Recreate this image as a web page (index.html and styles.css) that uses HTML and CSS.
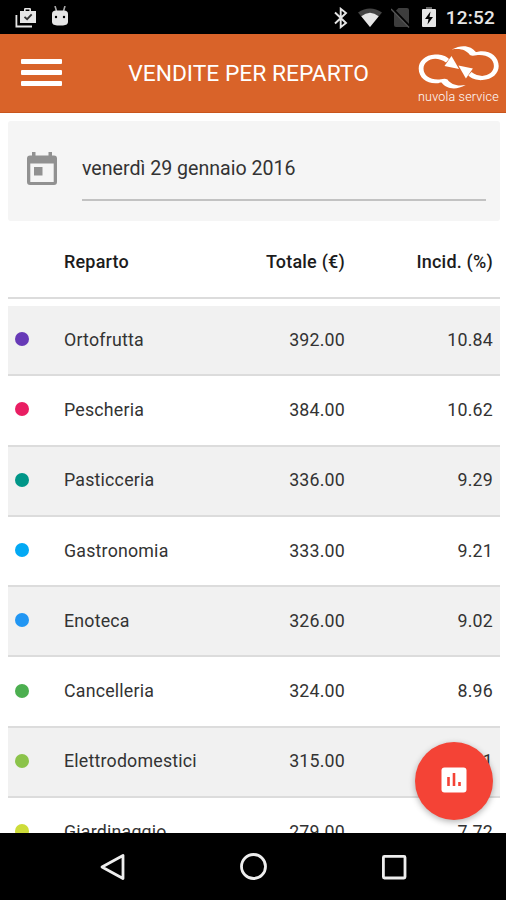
FILE: index.html
```
<!DOCTYPE html>
<html lang="it">

<head>
    <meta charset="UTF-8">
    <meta name="viewport" content="width=device-width, initial-scale=1.0">
    <title>Vendite per reparto</title>
    <link rel="stylesheet" href="styles.css">
</head>

<body>
    <div class="status-bar">
        <div class="status-bar__group">
            <svg class="status-bar__work" width="22" height="22" viewBox="0 0 22 22">
                <path d="M1.400 8v11.500h15.600" fill="none" stroke="#e6e6e6" stroke-width="1.800" />
                <path fill="#e6e6e6" fill-rule="evenodd" d="M5 4h4V2.200Q9 1 10.200 1h4.600Q16 1 16 2.200V4h5v12H5zM10.600 2.600V4h3.800V2.600z" />
                <path d="M9.500 9.800l2.600 2.400 4.600-4.800" fill="none" stroke="#333" stroke-width="1.800" />
            </svg>
            <svg width="18" height="22" viewBox="0 0 18 22">
                <path d="M4 0l1.500 5M14 0l-1.500 5" stroke="#aaa" stroke-width="1.600" />
                <path fill="#e6e6e6" d="M1 8q0-3.500 4-3.500h8q4 0 4 3.500v8q0 3-5 3.500H6q-5-.5-5-3.500z" />
                <circle cx="5" cy="11" r="1.200" />
                <circle cx="13" cy="11" r="1.200" />
            </svg>
        </div>
        <div class="status-bar__group status-bar__group--right">
            <svg class="status-bar__bluetooth" width="14" height="22" viewBox="0 0 14 22">
                <path d="M1 5.500l11 10.500-5.300 4.200V1.800L12 6 1 16.500" fill="none" stroke="#e6e6e6" stroke-width="1.900" />
            </svg>
            <svg class="status-bar__wifi" width="24" height="20" viewBox="0 0 24 20">
                <path fill="#444" d="M0 4.500q12-8 24 0L12 19z" />
                <path fill="#e6e6e6" d="M3.300 8.300q8.700-7 17.400 0L12 19z" />
            </svg>
            <svg class="status-bar__sim" width="20" height="21" viewBox="0 0 20 21">
                <path fill="#3d3d3d" d="M7.500 1H16q2 0 2 2v15q0 2-2 2H5q-2 0-2-2V5.500z" />
                <path d="M1 1.500l18 18.500" stroke="#000" stroke-width="3" />
                <path d="M0 2l18 18.500" stroke="#555" stroke-width="1.400" />
            </svg>
            <svg class="status-bar__battery" width="14" height="21" viewBox="0 0 14 21">
                <path fill="#666" d="M4 0h6v3H4z" />
                <rect y="2" width="14" height="18" rx="1" fill="#e6e6e6" />
                <path d="M8.500 4.500L3 12h3.500l-1 5.500L11 10H7.500z" />
            </svg>
            <span class="status-bar__time">12:52</span>
        </div>
    </div>

    <header class="header">
        <div class="header__menu">
            <span class="header__line"></span>
            <span class="header__line"></span>
            <span class="header__line"></span>
        </div>
        <h1 class="header__title">VENDITE PER REPARTO</h1>
        <div class="logo">
            <svg class="logo__icon" width="84" height="46" viewBox="0 0 84 46">
                <defs>
                    <g id="cloud">
                        <path d="M33 15C29 11 24 10.300 19 10.500C9 11 2.700 17 2.700 24.500C2.700 34 11 40 21 39.300C23 39.200 24 38.500 25.500 38.500C30 44.500 39 47 49.700 41C41 42.500 35 40.500 31.500 35.500C29 34.200 27 35 25 35.300C15 36.500 7.500 32 7.500 24.500C7.500 16.500 19 10.500 30 18.500z" />
                        <path d="M35.500 12L43 25L28.500 22z" />
                    </g>
                </defs>
                <use href="#cloud" fill="#fff" />
                <use href="#cloud" fill="#fff" transform="rotate(180 42.700 23.300)" />
            </svg>
            <span class="logo__text">nuvola service</span>
        </div>
    </header>

    <main class="content">
        <div class="date">
            <svg class="date__icon" width="30" height="34" viewBox="0 0 30 34">
                <path fill="#919191" fill-rule="evenodd" d="M5 0h3.500v3.500h13V0H25v3.500h2q3 0 3 3V30q0 3-3 3H3q-3 0-3-3V6.500q0-3 3-3h2zM3.300 11.500V30h23.400V11.500z" />
                <path fill="#919191" d="M7 15h8.500v8.500H7z" />
            </svg>
            <div class="date__input">venerdì 29 gennaio 2016</div>
        </div>

        <div class="table">
            <div class="row row--head">
                <span class="row__name">Reparto</span>
                <span class="row__total">Totale (€)</span>
                <span class="row__share">Incid. (%)</span>
            </div>
            <div class="row">
                <span class="row__dot row__dot--purple"></span>
                <span class="row__name">Ortofrutta</span>
                <span class="row__total">392.00</span>
                <span class="row__share">10.84</span>
            </div>
            <div class="row">
                <span class="row__dot row__dot--pink"></span>
                <span class="row__name">Pescheria</span>
                <span class="row__total">384.00</span>
                <span class="row__share">10.62</span>
            </div>
            <div class="row">
                <span class="row__dot row__dot--teal"></span>
                <span class="row__name">Pasticceria</span>
                <span class="row__total">336.00</span>
                <span class="row__share">9.29</span>
            </div>
            <div class="row">
                <span class="row__dot row__dot--light-blue"></span>
                <span class="row__name">Gastronomia</span>
                <span class="row__total">333.00</span>
                <span class="row__share">9.21</span>
            </div>
            <div class="row">
                <span class="row__dot row__dot--blue"></span>
                <span class="row__name">Enoteca</span>
                <span class="row__total">326.00</span>
                <span class="row__share">9.02</span>
            </div>
            <div class="row">
                <span class="row__dot row__dot--green"></span>
                <span class="row__name">Cancelleria</span>
                <span class="row__total">324.00</span>
                <span class="row__share">8.96</span>
            </div>
            <div class="row">
                <span class="row__dot row__dot--light-green"></span>
                <span class="row__name">Elettrodomestici</span>
                <span class="row__total">315.00</span>
                <span class="row__share">8.71</span>
            </div>
            <div class="row">
                <span class="row__dot row__dot--lime"></span>
                <span class="row__name">Giardinaggio</span>
                <span class="row__total">279.00</span>
                <span class="row__share">7.72</span>
            </div>
        </div>

        <div class="chart-button">
            <svg width="26" height="26" viewBox="0 0 26 26">
                <rect x=".5" y=".5" width="25" height="25" rx="3" fill="#fff" />
                <path d="M7.500 10v9M13 6v13M18.500 15v4" stroke="#f44336" stroke-width="2.600" />
            </svg>
        </div>
    </main>

    <nav class="nav-bar">
        <svg width="28" height="28" viewBox="0 0 28 28">
            <path d="M24 2.500v23L3 14z" fill="none" stroke="#eee" stroke-width="2.800" stroke-linejoin="round" />
        </svg>
        <svg width="28" height="28" viewBox="0 0 28 28">
            <circle cx="13.500" cy="13.500" r="12" fill="none" stroke="#eee" stroke-width="2.800" />
        </svg>
        <svg width="28" height="28" viewBox="0 0 28 28">
            <rect x="3.400" y="3.400" width="21.600" height="21.600" rx="1" fill="none" stroke="#eee" stroke-width="2.800" />
        </svg>
    </nav>
</body>

</html>
```
FILE: styles.css
```
* {
    box-sizing: border-box;
}

body {
    margin: 0;
    height: 900px;
    display: flex;
    flex-direction: column;
    overflow: hidden;
    background: #fff;
    color: #333;
    font-family: Roboto, sans-serif;
}

svg {
    display: block;
    flex: none;
}

/* status bar */
.status-bar {
    flex: none;
    height: 34px;
    padding: 0 11px 0 15px;
    display: flex;
    justify-content: space-between;
    background: #000;
}

.status-bar__group {
    display: flex;
    padding-top: 6px;
    gap: 14px;
}

.status-bar__work {
    margin-top: 1px;
}

.status-bar__group--right {
    gap: 0;
    padding-top: 7px;
}

.status-bar__wifi {
    margin: 1px 0 0 10px;
}

.status-bar__sim {
    margin-left: 9px;
}

.status-bar__battery {
    margin-left: 11px;
}

.status-bar__time {
    margin-left: 10px;
    color: #e6e6e6;
    font-size: 19px;
    font-weight: 500;
    line-height: 22px;
    letter-spacing: 0.2px;
}

/* header */
.header {
    flex: none;
    height: 79px;
    display: flex;
    justify-content: space-between;
    background: #d96329;
    border-bottom: 1px solid #c9551c;
    color: #fff;
}

.header__menu {
    width: 41px;
    margin: 25px 0 0 21px;
    display: flex;
    flex-direction: column;
    gap: 6px;
}

.header__line {
    height: 5px;
    border-radius: 1px;
    background: #fff;
}

.header__title {
    margin: 0;
    padding: 1px 0 0 19px;
    font-size: 22.8px;
    font-weight: 400;
    line-height: 78px;
}

.logo {
    width: 90px;
    padding-top: 10px;
}

.logo__text {
    display: block;
    padding-left: 2px;
    font-size: 12.5px;
    font-weight: 300;
    line-height: 14px;
    letter-spacing: 0.2px;
    white-space: nowrap;
}

/* date */
.content {
    position: relative;
    flex: 1;
    min-height: 0;
    padding: 8px 6px 0 8px;
    overflow: hidden;
}

.date {
    height: 100px;
    padding: 31px 14px 0 19px;
    display: flex;
    gap: 25px;
    background: #f5f5f5;
    border-radius: 3px;
}

.date__input {
    flex: 1;
    height: 49px;
    border-bottom: 2px solid #c2c2c2;
    font-size: 19.6px;
    line-height: 33px;
}

/* table */
.row {
    height: 70.3px;
    padding: 0 7px 2px 7px;
    display: flex;
    align-items: center;
    border-bottom: 2px solid #dcdcdc;
    font-size: 17.8px;
    letter-spacing: 0.2px;
}

.row:nth-child(even) {
    background: #f1f1f1;
}

.row--head {
    height: 78px;
    margin-bottom: 7px;
    padding: 5px 7px 0 56px;
    color: #1c1c1c;
    font-size: 18px;
    font-weight: 500;
    letter-spacing: 0.2px;
}

.row__dot {
    width: 14px;
    height: 14px;
    margin-right: 35px;
    border-radius: 50%;
}

.row__dot--purple {
    background: #673ab7;
}

.row__dot--pink {
    background: #e91e63;
}

.row__dot--teal {
    background: #009688;
}

.row__dot--light-blue {
    background: #03a9f4;
}

.row__dot--blue {
    background: #2196f3;
}

.row__dot--green {
    background: #4caf50;
}

.row__dot--light-green {
    background: #8bc34a;
}

.row__dot--lime {
    background: #cddc39;
}

.row__name {
    flex: 1;
}

.row__total {
    width: 120px;
    text-align: right;
}

.row__share {
    width: 148px;
    text-align: right;
}

/* chart button */
.chart-button {
    position: absolute;
    right: 13px;
    bottom: 13px;
    width: 78px;
    height: 78px;
    display: flex;
    align-items: center;
    justify-content: center;
    padding-bottom: 3px;
    background: #f44336;
    border-radius: 50%;
    box-shadow: 0 2px 6px rgba(0, 0, 0, 0.3);
}

/* navigation bar */
.nav-bar {
    flex: none;
    height: 67px;
    padding: 0 98px 0 99px;
    display: flex;
    align-items: center;
    justify-content: space-between;
    background: #000;
}
```
